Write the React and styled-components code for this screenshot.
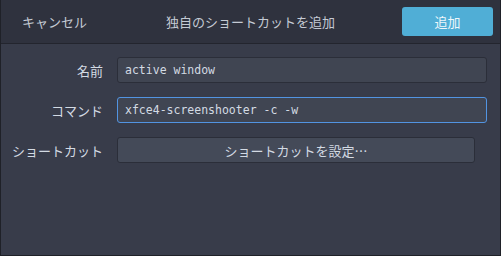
import React from "react";
import styled, { createGlobalStyle } from "styled-components";

const Global = createGlobalStyle`
  html, body { margin: 0; padding: 0; background: #383c4a; }
  body { font-family: "Noto Sans CJK JP", "Noto Sans", sans-serif; }
  * { box-sizing: border-box; }
`;

const Window = styled.div`
  width: 501px;
  height: 256px;
  background: #383c4a;
  border: 1px solid #1f2128;
  border-top: none;
  display: flex;
  flex-direction: column;
  color: #d3dae3;
  font-size: 13px;
`;

const HeaderBar = styled.div`
  height: 44px;
  flex: none;
  background: #2f323e;
  border-bottom: 1px solid #23252e;
  display: grid;
  grid-template-columns: 1fr auto 1fr;
  align-items: center;
  padding: 0 7px 0 7px;
`;

const FlatButton = styled.button`
  justify-self: start;
  background: none;
  border: none;
  color: #c4cad4;
  font: inherit;
  font-size: 13px;
  padding: 4px 14px;
`;

const Title = styled.div`
  color: #c4cad4;
  font-size: 13px;
`;

const SuggestedButton = styled.button`
  justify-self: end;
  width: 91px;
  height: 29px;
  margin-top: -1px;
  border: none;
  border-radius: 3px;
  background: #50aed6;
  color: #eef7fb;
  font: inherit;
  font-size: 13px;
`;

const Body = styled.div`
  flex: 1;
  display: grid;
  grid-template-columns: auto 1fr;
  column-gap: 14px;
  row-gap: 14px;
  align-content: start;
  align-items: center;
  padding: 13px 13px 0 11px;
`;

const Label = styled.div`
  justify-self: end;
  font-size: 13px;
  color: #d3dae3;
`;

const Entry = styled.div`
  height: 26px;
  border-radius: 3px;
  border: 1px solid ${(p) => (p.$focused ? "#5294e2" : "#2b2e39")};
  background: #404552;
  display: flex;
  align-items: center;
  padding: 0 7px;
  font-family: "DejaVu Sans Mono", monospace;
  font-size: 11.5px;
  color: #d3dae3;
`;

const Button = styled.button`
  width: 358px;
  height: 26px;
  border-radius: 3px;
  border: 1px solid #2b2e39;
  background: #444a58;
  color: #d3dae3;
  font: inherit;
  font-size: 13px;
  padding: 0;
`;

export default function App() {
  return (
    <>
      <Global />
      <Window>
        <HeaderBar>
          <FlatButton>キャンセル</FlatButton>
          <Title>独自のショートカットを追加</Title>
          <SuggestedButton>追加</SuggestedButton>
        </HeaderBar>
        <Body>
          <Label>名前</Label>
          <Entry>active window</Entry>
          <Label>コマンド</Label>
          <Entry $focused>xfce4-screenshooter -c -w</Entry>
          <Label>ショートカット</Label>
          <Button>ショートカットを設定…</Button>
        </Body>
      </Window>
    </>
  );
}
